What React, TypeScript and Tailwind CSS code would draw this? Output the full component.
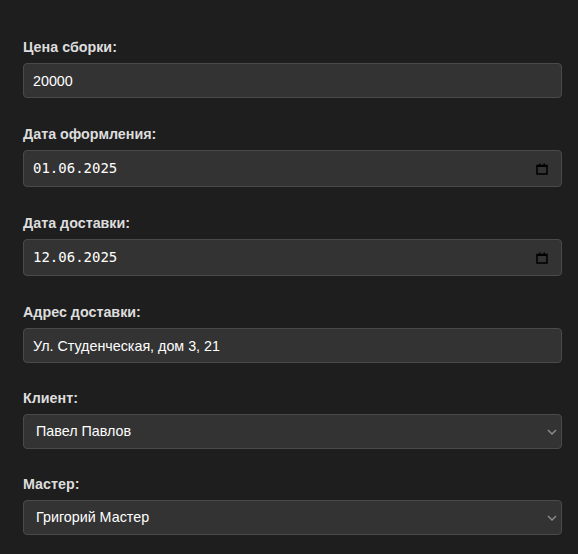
import { useState } from 'react'

function CalendarIcon() {
  return (
    <svg width="12" height="12" viewBox="0 0 12 12" fill="none" className="shrink-0">
      <rect x="1" y="2.5" width="10" height="8.5" stroke="#000" strokeWidth="1.5" />
      <rect x="1" y="2" width="10" height="2" fill="#000" />
      <rect x="3" y="0.5" width="1.5" height="2" fill="#000" />
      <rect x="7.5" y="0.5" width="1.5" height="2" fill="#000" />
    </svg>
  )
}

function Chevron() {
  return (
    <svg width="10" height="6" viewBox="0 0 10 6" fill="none" className="pointer-events-none absolute right-[5px] top-1/2 -translate-y-1/2">
      <path d="M1 1l4 4 4-4" stroke="#8a8a8a" strokeWidth="1.5" />
    </svg>
  )
}

const fieldBox = 'w-full rounded-[4px] border border-[#4a4a4a] bg-[#333333] text-[14.3px] text-white outline-none'

function Label({ children }: { children: React.ReactNode }) {
  return <label className="block h-[16px] text-[14.3px] leading-[16px] font-bold text-[#dddddd]">{children}</label>
}

export default function App() {
  const [price, setPrice] = useState('20000')
  const [address, setAddress] = useState('Ул. Студенческая, дом 3, 21')
  const [client, setClient] = useState('Павел Павлов')
  const [master, setMaster] = useState('Григорий Мастер')

  return (
    <div className="min-h-[554px] bg-[#1e1e1e] pl-[23px] pr-[16px] pt-[39px]" style={{ fontFamily: '"Liberation Sans", Arial, sans-serif' }}>
      {/* Цена */}
      <Label>Цена сборки:</Label>
      <input
        value={price}
        onChange={(e) => setPrice(e.target.value)}
        className={`${fieldBox} mt-[8px] block h-[35px] px-[9px]`}
      />

      {/* Даты */}
      <div className="mt-[28px]">
        <Label>Дата оформления:</Label>
        <div className={`${fieldBox} mt-[8px] flex h-[37px] items-center justify-between pl-[9px] pr-[13px]`}>
          <span className="text-[14px] text-white" style={{ fontFamily: '"DejaVu Sans Mono", monospace' }}>01.06.2025</span>
          <CalendarIcon />
        </div>
      </div>

      <div className="mt-[28px]">
        <Label>Дата доставки:</Label>
        <div className={`${fieldBox} mt-[8px] flex h-[37px] items-center justify-between pl-[9px] pr-[13px]`}>
          <span className="text-[14px] text-white" style={{ fontFamily: '"DejaVu Sans Mono", monospace' }}>12.06.2025</span>
          <CalendarIcon />
        </div>
      </div>

      {/* Адрес */}
      <div className="mt-[28px]">
        <Label>Адрес доставки:</Label>
        <input
          value={address}
          onChange={(e) => setAddress(e.target.value)}
          className={`${fieldBox} mt-[8px] block h-[35px] px-[9px]`}
        />
      </div>

      {/* Клиент */}
      <div className="mt-[27px]">
        <Label>Клиент:</Label>
        <div className="relative mt-[8px]">
          <select
            value={client}
            onChange={(e) => setClient(e.target.value)}
            className={`${fieldBox} block h-[35px] appearance-none pl-[12px] pr-[20px]`}
          >
            <option>Павел Павлов</option>
            <option>Иван Иванов</option>
          </select>
          <Chevron />
        </div>
      </div>

      {/* Мастер */}
      <div className="mt-[27px]">
        <Label>Мастер:</Label>
        <div className="relative mt-[8px]">
          <select
            value={master}
            onChange={(e) => setMaster(e.target.value)}
            className={`${fieldBox} block h-[35px] appearance-none pl-[12px] pr-[20px]`}
          >
            <option>Григорий Мастер</option>
            <option>Сергей Мастер</option>
          </select>
          <Chevron />
        </div>
      </div>
    </div>
  )
}
